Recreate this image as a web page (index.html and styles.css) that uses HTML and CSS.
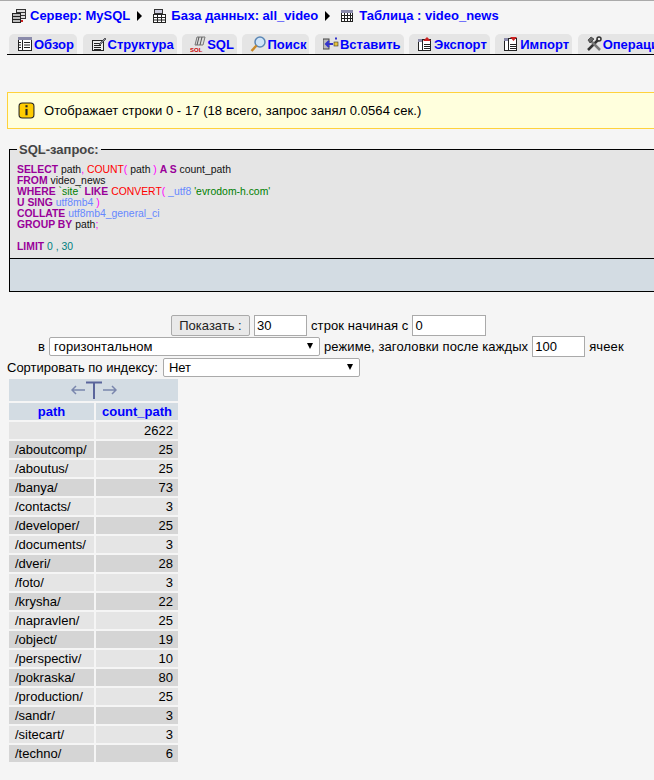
FILE: index.html
```html
<!DOCTYPE html>
<html>

<head>
    <title>video_news</title>
    <link rel="stylesheet" href="styles.css">
</head>

<body>
    <div class="crumbs">
        <svg class="icon" viewBox="0 0 16 16"><rect x="5.500" y="1.500" width="9" height="9" fill="#ddd" stroke="#333"/><path d="M5.500 4.500h9M5.500 7.500h9" stroke="#333"/><rect x="1.500" y="5.500" width="8" height="9" fill="#bbb" stroke="#222"/><path d="M1.500 8.500h8M1.500 11.500h8" stroke="#222"/><rect x="10" y="12" width="2" height="2" fill="#c22"/></svg>
        <a href="#">Сервер: MySQL</a>
        <span class="arrow"></span>
        <svg class="icon" viewBox="0 0 16 16"><rect x="2.500" y="1.500" width="8" height="4" fill="#ccd" stroke="#333"/><rect x="1.500" y="6.500" width="12" height="8" fill="#fff" stroke="#222"/><path d="M1.500 9.500h12M1.500 12h12M5.500 6.500v8M9.500 6.500v8" stroke="#222"/></svg>
        <a href="#">База данных: all_video</a>
        <span class="arrow"></span>
        <svg class="icon" viewBox="0 0 16 16"><rect x="1.500" y="2.500" width="11" height="11" fill="#fff" stroke="#222"/><rect x="1" y="2" width="12" height="3" fill="#8a8aaa"/><path d="M1.500 7.500h11M1.500 10.500h11M4.500 5v8M7.500 5v8M10.500 5v8" stroke="#222"/></svg>
        <a href="#">Таблица : video_news</a>
    </div>

    <div class="tabs">
        <a class="tab" href="#"><svg viewBox="0 0 16 16"><rect x="1.500" y="1.500" width="13" height="13" fill="#fff" stroke="#222"/><rect x="1" y="1" width="14" height="3" fill="#8a8aaa"/><path d="M5.500 4v11M7 6.500h6M7 9h6M7 11.500h6M2 6.500h2M2 9h2M2 11.500h2" stroke="#222"/></svg>Обзор</a>
        <a class="tab" href="#"><svg viewBox="0 0 16 16"><rect x="1.500" y="4.500" width="11" height="10" fill="#eee" stroke="#222"/><path d="M3 7.500h7M3 9.500h7M3 11.500h7M3 13.500h7" stroke="#222"/><path d="M8 8l6-6 1 1-6 6z" fill="#889" stroke="#222" stroke-width=".6"/></svg>Структура</a>
        <a class="tab" href="#"><svg viewBox="0 0 16 16"><path d="M7 1h8l-2 8H5z" fill="#ddd" stroke="#777"/><path d="M9 1L7 9M12 1l-2 8" stroke="#555"/><text x="0" y="15.500" class="sqlMark">SQL</text></svg>SQL</a>
        <a class="tab" href="#"><svg viewBox="0 0 16 16"><circle cx="10" cy="6" r="5" fill="#cfe4f7" stroke="#5a86b5" stroke-width="1.500"/><path d="M6.500 9.500L1.500 15" stroke="#c98a2a" stroke-width="2.500"/></svg>Поиск</a>
        <a class="tab" href="#"><svg viewBox="0 0 16 16"><rect x="0" y="3" width="6" height="10" fill="#bbb" stroke="#444"/><path d="M10 8H3M6 5L3 8l3 3" fill="none" stroke="#33c" stroke-width="2"/><rect x="11" y="6" width="4" height="4" fill="#e8c33a" stroke="#333" stroke-width=".6"/><path d="M13 1v3M12 2.500h2" stroke="#33c"/></svg>Вставить</a>
        <a class="tab" href="#"><svg viewBox="0 0 16 16"><rect x="1.500" y="3.500" width="12" height="11" fill="#fff" stroke="#222"/><rect x="1" y="3" width="4" height="3" fill="#8a8aaa"/><path d="M5.500 3v12M7 8.500h6M7 10.500h6M7 12.500h6" stroke="#222"/><path d="M6 5l4-4 4 4z" fill="#c22"/></svg>Экспорт</a>
        <a class="tab" href="#"><svg viewBox="0 0 16 16"><rect x="1.500" y="2.500" width="12" height="12" fill="#fff" stroke="#222"/><rect x="1" y="2" width="4" height="3" fill="#8a8aaa"/><path d="M5.500 2v13M7 8.500h6M7 10.500h6M7 12.500h6" stroke="#222"/><path d="M7 1h7l-3.500 4z" fill="#c22"/></svg>Импорт</a>
        <a class="tab" href="#"><svg viewBox="0 0 16 16"><path d="M2 14L12 4" stroke="#333" stroke-width="2.500"/><path d="M14 14L5 5" stroke="#777" stroke-width="2.500"/><path d="M2 4l3-3 3 2-4 4z" fill="#666" stroke="#222" stroke-width=".6"/><circle cx="13" cy="3" r="2" fill="none" stroke="#333" stroke-width="1.500"/></svg>Операции</a>
    </div>

    <div class="notice">
        <svg class="noticeIcon" viewBox="0 0 16 16"><rect x="1" y="1" width="14" height="14" rx="3" fill="#fc0" stroke="#222"/><rect x="7" y="3" width="2" height="2" fill="#222"/><rect x="7" y="6.500" width="2" height="6" fill="#222"/></svg>
        Отображает строки 0 - 17 (18 всего, запрос занял 0.0564 сек.)
    </div>

    <fieldset class="sqlBox">
        <legend>SQL-запрос:</legend>
        <div class="sqlCode"><span class="kw">SELECT</span> path<span class="pn">,</span> <span class="fn">COUNT</span><span class="pn">(</span> path <span class="pn">)</span> <span class="kw">A S</span> count_path<br><span class="kw">FROM</span> video_news<br><span class="kw">WHERE</span> <span class="str">`site`</span> <span class="kw">LIKE</span> <span class="fn">CONVERT</span><span class="pn">(</span> <span class="cs">_utf8</span> <span class="str">'evrodom-h.com'</span><br><span class="kw">U SING</span> <span class="cs">utf8mb4</span> <span class="pn">)</span><br><span class="kw">COLLATE</span> <span class="cs">utf8mb4_general_ci</span><br><span class="kw">GROUP BY</span> path<span class="pn">;</span><br><br><span class="kw">LIMIT</span> <span class="num">0 , 30</span></div>
    </fieldset>
    <div class="sqlTools"></div>

    <div class="navRow rowShow">
        <button class="button">Показать :</button>
        <input class="field short" value="30">
        <span>строк начиная с</span>
        <input class="field" value="0">
    </div>
    <div class="navRow rowMode">
        <span>в</span>
        <div class="select wide">горизонтальном</div>
        <span>режиме, заголовки после каждых</span>
        <input class="field short" value="100">
        <span>ячеек</span>
    </div>
    <div class="navRow rowSort">
        <span>Сортировать по индексу:</span>
        <div class="select narrow">Нет</div>
    </div>

    <div class="results">
        <div class="switch">
            <svg viewBox="0 0 46 18" width="46" height="18"><path d="M1 9h13M5 5L1 9l4 4" fill="none" stroke="#7a86ad" stroke-width="1.500"/><path d="M32 9h13M41 5l4 4-4 4" fill="none" stroke="#7a86ad" stroke-width="1.500"/><path d="M15 1.500h16M23 1v17" stroke="#5a659b" stroke-width="2"/></svg>
        </div>
        <div class="head">path</div>
        <div class="head">count_path</div>

        <div class="cell even"></div><div class="cell even right">2622</div>
        <div class="cell odd">/aboutcomp/</div><div class="cell odd right">25</div>
        <div class="cell even">/aboutus/</div><div class="cell even right">25</div>
        <div class="cell odd">/banya/</div><div class="cell odd right">73</div>
        <div class="cell even">/contacts/</div><div class="cell even right">3</div>
        <div class="cell odd">/developer/</div><div class="cell odd right">25</div>
        <div class="cell even">/documents/</div><div class="cell even right">3</div>
        <div class="cell odd">/dveri/</div><div class="cell odd right">28</div>
        <div class="cell even">/foto/</div><div class="cell even right">3</div>
        <div class="cell odd">/krysha/</div><div class="cell odd right">22</div>
        <div class="cell even">/napravlen/</div><div class="cell even right">25</div>
        <div class="cell odd">/object/</div><div class="cell odd right">19</div>
        <div class="cell even">/perspectiv/</div><div class="cell even right">10</div>
        <div class="cell odd">/pokraska/</div><div class="cell odd right">80</div>
        <div class="cell even">/production/</div><div class="cell even right">25</div>
        <div class="cell odd">/sandr/</div><div class="cell odd right">3</div>
        <div class="cell even">/sitecart/</div><div class="cell even right">3</div>
        <div class="cell odd">/techno/</div><div class="cell odd right">6</div>
    </div>
</body>

</html>
```

FILE: styles.css
```css
html {
    overflow: hidden;
}

body {
    margin: 0;
    width: 654px;
    height: 780px;
    overflow: hidden;
    background: #f5f5f5;
    border-top: 1px solid #aaa;
    box-sizing: border-box;
    font-family: "Liberation Sans", Arial, sans-serif;
    font-size: 13px;
    color: #000;
}

a {
    color: #0000ff;
    text-decoration: none;
}

.crumbs {
    display: flex;
    align-items: center;
    height: 29px;
    padding-left: 11px;
    font-weight: bold;
    white-space: nowrap;
}

.crumbs .icon {
    width: 16px;
    height: 16px;
    margin-right: 3px;
}

.arrow {
    width: 0;
    height: 0;
    margin: 0 10px 0 7px;
    border-left: 5px solid #000;
    border-top: 5px solid transparent;
    border-bottom: 5px solid transparent;
}

.tabs {
    display: flex;
    gap: 5.500px;
    height: 20px;
    margin: 4px 0 0 7px;
    padding-left: 2px;
    border-bottom: 1px solid #000;
    overflow: hidden;
    white-space: nowrap;
}

.tab {
    display: flex;
    align-items: center;
    height: 20px;
    padding: 0 3px 0 8px;
    background: #e5e5e5;
    border-radius: 5px 5px 0 0;
    font-weight: bold;
}

.tab svg {
    width: 16px;
    height: 16px;
    margin-right: 1px;
}

.sqlMark {
    font-family: "Liberation Sans", Arial, sans-serif;
    font-size: 6px;
    font-weight: bold;
    fill: #c00;
}

.notice {
    display: flex;
    align-items: center;
    height: 37px;
    margin: 37px 0 0 7px;
    padding-left: 10px;
    box-sizing: border-box;
    background: #ffffdd;
    border: 1px solid #ffd23c;
    border-right: 0;
    letter-spacing: 0.06px;
    white-space: nowrap;
}

.noticeIcon {
    width: 17px;
    height: 17px;
    margin-right: 9px;
}

.sqlBox {
    height: 116px;
    margin: 13px 0 0 9px;
    padding: 0 0 0 7px;
    min-width: 0;
    box-sizing: border-box;
    background: #e5e5e5;
    border: 1px solid #000;
    border-width: 1px 0 0 1px;
}

.sqlBox legend {
    padding: 0 2px;
    font-weight: bold;
    color: #444;
}

.sqlCode {
    margin-top: 7px;
    font-size: 10.400px;
    line-height: 11px;
    color: #111;
    white-space: nowrap;
}

.kw {
    color: #990099;
    font-weight: bold;
}

.fn {
    color: #ff0000;
}

.pn {
    color: #ff00ff;
}

.str {
    color: #008000;
}

.cs {
    color: #6688ff;
}

.num {
    color: #008080;
}

.sqlTools {
    height: 34px;
    margin-left: 9px;
    box-sizing: border-box;
    background: #d3dce3;
    border: 1px solid #000;
    border-right: 0;
}

.navRow {
    display: flex;
    align-items: center;
    gap: 4px;
    height: 21px;
    letter-spacing: 0.1px;
    white-space: nowrap;
}

.rowShow {
    margin-top: 23px;
    padding-left: 171px;
}

.rowMode {
    padding-left: 38px;
}

.rowSort {
    height: 19px;
    margin-top: 1px;
    padding-left: 7px;
    letter-spacing: 0;
    gap: 5px;
}

.button {
    width: 79px;
    height: 21px;
    padding: 0;
    background: #e9e9e9;
    border: 1px solid #aaa;
    border-radius: 2px;
    font-family: "Liberation Sans", Arial, sans-serif;
    font-size: 13px;
    color: #222;
}

.field {
    width: 74px;
    height: 21px;
    padding: 0 2px;
    box-sizing: border-box;
    background: #fff;
    border: 1px solid #aaa;
    font-family: "Liberation Sans", Arial, sans-serif;
    font-size: 13px;
}

.field.short {
    width: 53px;
}

.select {
    position: relative;
    height: 19px;
    padding-left: 4px;
    box-sizing: border-box;
    background: #fff;
    border: 1px solid #aaa;
    border-radius: 2px;
    line-height: 17px;
}

.select::after {
    content: "";
    position: absolute;
    right: 6px;
    top: 5px;
    border-top: 6px solid #000;
    border-left: 3px solid transparent;
    border-right: 3px solid transparent;
}

.select.wide {
    width: 271px;
}

.select.narrow {
    width: 197px;
    padding-left: 5px;
}

.results {
    display: grid;
    grid-template-columns: 85px 82px;
    grid-template-rows: 22px;
    grid-auto-rows: 17px;
    gap: 2px;
    margin: 2px 0 0 9px;
}

.switch {
    grid-column: 1 / -1;
    display: flex;
    align-items: center;
    justify-content: center;
    background: #d3dce3;
}

.head {
    display: flex;
    align-items: center;
    justify-content: center;
    background: #d3dce3;
    color: #0000ff;
    font-weight: bold;
}

.cell {
    padding: 0 5px 0 6px;
    line-height: 17px;
    white-space: nowrap;
}

.right {
    text-align: right;
}

.even {
    background: #e5e5e5;
}

.odd {
    background: #d5d5d5;
}
```
